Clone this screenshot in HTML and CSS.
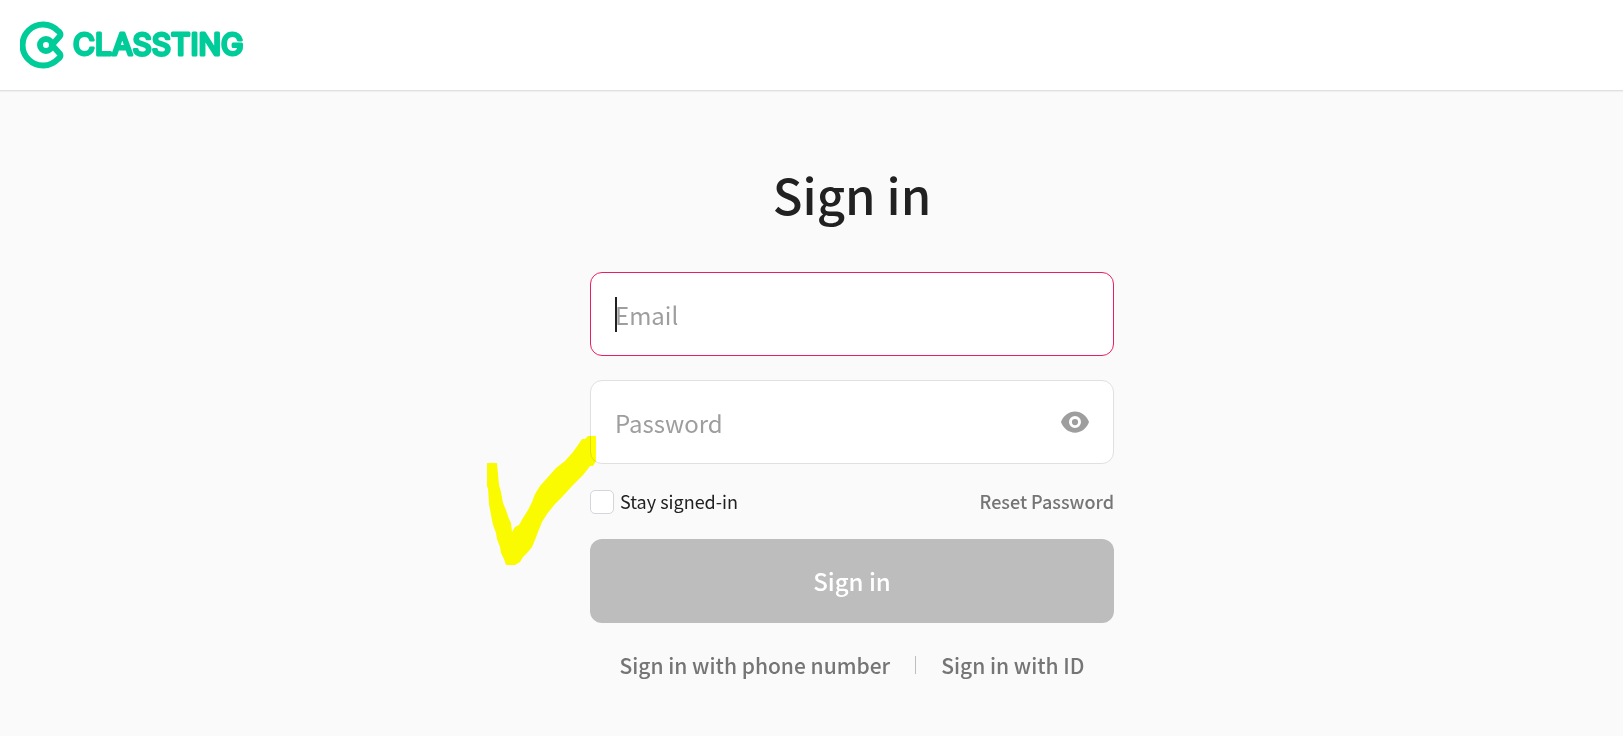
FILE: index.html
```
<!DOCTYPE html>
<html lang="en">
<head>
<meta charset="UTF-8">
<meta name="viewport" content="width=device-width, initial-scale=1">
<title>Sign in - Classting</title>
<link rel="stylesheet" href="styles.css">
</head>
<body>

<header class="header">
  <a class="logo" href="#" aria-label="Classting">
    <svg width="228" height="48" viewBox="0 0 228 48">
      <g fill="none" stroke="#00cc99" stroke-width="6" stroke-linecap="round" stroke-linejoin="round">
        <path d="M32 24 L40 33 C41 35 40 37 38 38 A20.500 20.500 0 1 1 38 10 C40 11 41 13 40 15 Z"/>
        <circle cx="26" cy="24" r="6"/>
      </g>
      <text class="logo-text" x="53" y="34">CLASSTING</text>
    </svg>
  </a>
</header>

<main class="main">
  <form class="signin">
    <h1 class="title">Sign in</h1>

    <div class="field focused">
      <input class="input error" type="email" placeholder="Email" aria-label="Email">
    </div>

    <div class="field">
      <input class="input" type="password" placeholder="Password" aria-label="Password">
      <button class="eye" type="button" aria-label="Show password">
        <svg width="30" height="30" viewBox="0 0 24 24">
          <path fill="#9e9e9e" d="M12 3.500C7 3.500 2.500 7 .8 12c1.700 5 6.200 8.500 11.200 8.500s9.500-3.500 11.200-8.500c-1.700-5-6.200-8.500-11.200-8.500zm0 13.300a4.800 4.800 0 1 1 0-9.600 4.800 4.800 0 0 1 0 9.600zm0-7.300a2.500 2.500 0 1 0 0 5 2.500 2.500 0 0 0 0-5z"/>
        </svg>
      </button>
      <svg class="mark" width="109" height="129" viewBox="0 0 109 129">
        <path fill="#ffff00" d="M0 27H10L11 38L12 49L14 56L16 67L19 74L22 83L24 87L25 96L28 91L32 89L36 82L41 74L45 66L48 58L53 50L61 41L69 32L78 25L86 16L91 9L95 3L98 3L101 0H109V25L106 30H103L100 34L96 39L86 49L75 61L68 68L60 78L55 86L51 96L48 104L45 111L41 116L36 121L33 126L28 129H19L17 123L14 117L13 111L10 103L9 97L6 89L4 79L2 68L1 52L0 51Z"/>
      </svg>
    </div>

    <div class="options">
      <label class="stay"><input class="checkbox" type="checkbox">Stay signed-in</label>
      <a class="reset" href="#">Reset Password</a>
    </div>

    <button class="submit" type="submit" disabled>Sign in</button>

    <nav class="links">
      <a class="link" href="#">Sign in with phone number</a>
      <span class="divider"></span>
      <a class="link" href="#">Sign in with ID</a>
    </nav>
  </form>
</main>

</body>
</html>
```

FILE: styles.css
```
* {
  box-sizing: border-box;
}

body {
  margin: 0;
  background-color: #fafafa;
  color: #212121;
  font-family: "Noto Sans CJK KR", "Noto Sans", sans-serif;
}

a {
  color: #757575;
  text-decoration: none;
}

/* Header */
.header {
  display: flex;
  align-items: center;
  height: 91px;
  padding: 0 20px;
  background-color: #ffffff;
  border-bottom: 1px solid #e0e0e0;
  box-shadow: 0 1px 1px rgba(0, 0, 0, 0.04);
}

.logo svg {
  display: block;
}

.logo-text {
  font-family: "Inter", sans-serif;
  font-size: 30px;
  font-weight: 400;
  fill: #00cc99;
  stroke: #00cc99;
  stroke-width: 3px;
  stroke-linejoin: round;
}

/* Sign in form */
.main {
  display: flex;
  justify-content: center;
  padding: 67px 0 40px 81px;
}

.signin {
  width: 100%;
  max-width: 524px;
}

.title {
  margin: 0 0 42px;
  font-size: 49px;
  line-height: 72px;
  font-weight: 500;
  text-align: center;
}

.field {
  position: relative;
  margin-bottom: 24px;
}

.input {
  display: block;
  width: 100%;
  height: 84px;
  padding: 0 24px;
  border: 1px solid #e0e0e0;
  border-radius: 12px;
  background-color: #ffffff;
  color: #212121;
  font-family: inherit;
  font-size: 24px;
  outline: none;
}

.input::placeholder {
  color: #9e9e9e;
}

.input.error {
  border-color: #e91e63;
  caret-color: transparent;
}

/* text cursor of the active field */
.focused::before {
  content: "";
  position: absolute;
  left: 25px;
  top: 25px;
  width: 2px;
  height: 35px;
  background-color: #212121;
}

.eye {
  position: absolute;
  right: 24px;
  top: 27px;
  padding: 0;
  border: 0;
  background: none;
}

.eye svg {
  display: block;
}

.mark {
  position: absolute;
  left: -103px;
  top: 56px;
  mix-blend-mode: multiply;
  pointer-events: none;
}

.options {
  display: flex;
  justify-content: space-between;
  height: 27px;
  font-size: 18px;
  line-height: 26px;
}

.stay {
  display: flex;
  align-items: flex-start;
  gap: 6px;
}

.checkbox {
  appearance: none;
  width: 24px;
  height: 24px;
  margin: 2px 0 0;
  border: 1px solid #d5d5dd;
  border-radius: 5px;
  background-color: #ffffff;
}

.reset {
  font-weight: 500;
}

.submit {
  display: block;
  width: 100%;
  height: 84px;
  margin: 24px 0;
  padding: 0 0 2px;
  border: 0;
  border-radius: 12px;
  background-color: #bdbdbd;
  color: #ffffff;
  font-family: inherit;
  font-size: 24px;
  font-weight: 500;
}

.links {
  display: flex;
  justify-content: center;
  align-items: center;
  gap: 25px;
  font-size: 21px;
  line-height: 36px;
  font-weight: 500;
}

.divider {
  width: 1px;
  height: 18px;
  background-color: #bdbdbd;
}
```
